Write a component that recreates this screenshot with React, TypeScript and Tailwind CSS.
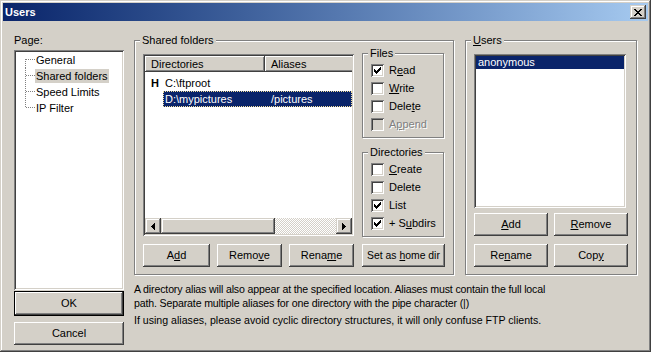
import type { ReactNode } from "react";

// classic 3d borders
const raised =
  "shadow-[inset_-1px_-1px_#404040,inset_1px_1px_#ffffff,inset_-2px_-2px_#808080,inset_2px_2px_#d4d0c8]";
const raisedSoft =
  "shadow-[inset_-1px_-1px_#404040,inset_1px_1px_#d4d0c8,inset_-2px_-2px_#808080,inset_2px_2px_#ffffff]";
const sunken =
  "shadow-[inset_1px_1px_#808080,inset_-1px_-1px_#ffffff,inset_2px_2px_#404040,inset_-2px_-2px_#d4d0c8]";

function Button({ children, className = "" }: { children: ReactNode; className?: string }) {
  return (
    <button
      type="button"
      className={`flex h-[23px] shrink-0 items-center justify-center bg-[#d4d0c8] leading-[13px] ${raised} ${className}`}
    >
      <span>{children}</span>
    </button>
  );
}

function GroupBox({
  label,
  className = "",
  children,
}: {
  label: ReactNode;
  className?: string;
  children?: ReactNode;
}) {
  return (
    <div
      className={`relative shrink-0 border border-[#808080] shadow-[1px_1px_0_#ffffff,inset_1px_1px_0_#ffffff] ${className}`}
    >
      <span className="absolute -top-[8px] left-[5px] bg-[#d4d0c8] px-[2px] leading-[14px]">{label}</span>
      {children}
    </div>
  );
}

function CheckMark() {
  return (
    <svg width="7" height="7" viewBox="0 0 7 7" shapeRendering="crispEdges">
      <path
        fill="#000"
        d="M6 0h1v1H6z M5 1h2v1H5z M0 2h1v1H0z M4 2h3v1H4z M0 3h2v1H0z M3 3h3v1H3z M0 4h5v1H0z M1 5h3v1H1z M2 6h1v1H2z"
      />
    </svg>
  );
}

function Check({
  checked = false,
  disabled = false,
  children,
}: {
  checked?: boolean;
  disabled?: boolean;
  children: ReactNode;
}) {
  return (
    <div className="flex h-[18px] items-center">
      <span
        className={`flex h-[13px] w-[13px] shrink-0 items-center justify-center ${sunken} ${
          disabled ? "bg-[#d4d0c8]" : "bg-white"
        }`}
      >
        {checked && <CheckMark />}
      </span>
      <span className={`ml-[5px] ${disabled ? "text-[#808080] [text-shadow:1px_1px_0_#ffffff]" : ""}`}>
        {children}
      </span>
    </div>
  );
}

function Arrow({ dir }: { dir: "left" | "right" }) {
  return (
    <svg width="4" height="7" viewBox="0 0 4 7" shapeRendering="crispEdges">
      <path
        fill="#000"
        d={
          dir === "left"
            ? "M3 0h1v7H3z M2 1h1v5H2z M1 2h1v3H1z M0 3h1v1H0z"
            : "M0 0h1v7H0z M1 1h1v5H1z M2 2h1v3H2z M3 3h1v1H3z"
        }
      />
    </svg>
  );
}

const pages = ["General", "Shared folders", "Speed Limits", "IP Filter"];

function PageTree() {
  return (
    <div className={`mt-[3px] h-[240px] bg-white pl-[11px] pt-[2px] ${sunken}`}>
      {pages.map((p, i) => (
        <div key={p} className="flex h-[16px] items-center">
          <svg width="10" height="16" className="shrink-0" shapeRendering="crispEdges">
            <line
              x1="0.5"
              x2="0.5"
              y1={i === 0 ? 7 : 0}
              y2={i === pages.length - 1 ? 8 : 16}
              stroke="#808080"
              strokeDasharray="1 1"
            />
            <line x1="1" x2="10" y1="7.5" y2="7.5" stroke="#808080" strokeDasharray="1 1" />
          </svg>
          <span className={`h-[14px] px-[1px] leading-[14px] ${p === "Shared folders" ? "bg-[#d4d0c8]" : ""}`}>
            {p}
          </span>
        </div>
      ))}
    </div>
  );
}

function FolderList() {
  return (
    <div className={`mt-[1px] flex h-[182px] w-[211px] shrink-0 bg-white p-[2px] ${sunken}`}>
      <div className="flex flex-1 flex-col overflow-hidden">
        <div className="flex h-[16px] shrink-0">
          <div className={`flex w-[120px] shrink-0 items-center bg-[#d4d0c8] pl-[6px] ${raised}`}>Directories</div>
          <div className={`flex w-[100px] shrink-0 items-center bg-[#d4d0c8] pl-[6px] ${raised}`}>Aliases</div>
        </div>

        <div className="flex-1 pt-[3px]">
          <div className="flex h-[16px] items-center">
            <span className="w-[18px] shrink-0 pl-[6px] font-bold">H</span>
            <span className="pl-[2px]">{"C:\\ftproot"}</span>
          </div>
          <div className="flex h-[16px] items-center">
            <span className="w-[18px] shrink-0" />
            <div className="flex h-full flex-1 items-center bg-[#0a246a] text-white outline-1 -outline-offset-1 outline-dotted outline-[#f3df9a]">
              <span className="w-[102px] shrink-0 pl-[2px]">{"D:\\mypictures"}</span>
              <span className="pl-[6px]">/pictures</span>
            </div>
          </div>
        </div>

        {/* horizontal scrollbar */}
        <div className="flex h-[16px] shrink-0">
          <div className={`flex w-[16px] shrink-0 items-center justify-center bg-[#d4d0c8] ${raisedSoft}`}>
            <Arrow dir="left" />
          </div>
          <div className={`w-[114px] shrink-0 bg-[#d4d0c8] ${raisedSoft}`} />
          <div className="flex-1 bg-[repeating-conic-gradient(#ffffff_0%_25%,#d4d0c8_0%_50%)] bg-[length:2px_2px]" />
          <div className={`flex w-[16px] shrink-0 items-center justify-center bg-[#d4d0c8] ${raisedSoft}`}>
            <Arrow dir="right" />
          </div>
        </div>
      </div>
    </div>
  );
}

export default function App() {
  return (
    <div
      className={`h-[352px] w-[651px] overflow-hidden bg-[#d4d0c8] p-[3px] font-['Liberation_Sans',Arial,sans-serif] text-[11px] leading-[13px] text-black ${raisedSoft}`}
    >
      {/* title bar */}
      <div className="flex h-[18px] items-center justify-between bg-linear-to-r from-[#0a246a] to-[#a6caf0] px-[2px]">
        <span className="font-bold leading-[18px] text-white">Users</span>
        <button type="button" className={`flex h-[14px] w-[16px] items-center justify-center bg-[#d4d0c8] ${raisedSoft}`}>
          <svg width="8" height="7" viewBox="0 0 8 7" shapeRendering="crispEdges">
            <path
              fill="#000"
              d="M0 0h2v1H0z M6 0h2v1H6z M1 1h2v1H1z M5 1h2v1H5z M2 2h4v1H2z M3 3h2v1H3z M2 4h4v1H2z M1 5h2v1H1z M5 5h2v1H5z M0 6h2v1H0z M6 6h2v1H6z"
            />
          </svg>
        </button>
      </div>

      <div className="flex pl-[11px] pt-[13px]">
        {/* ===== left: pages ===== */}
        <div className="flex w-[110px] shrink-0 flex-col">
          <div className="h-[13px] leading-[13px]">Page:</div>
          <PageTree />
          <div className="mt-[1px] border border-black">
            <Button className="w-full">OK</Button>
          </div>
          <Button className="mt-[6px] w-full">Cancel</Button>
        </div>

        {/* ===== right ===== */}
        <div className="ml-[10px] mt-[6px] flex flex-col">
          <div className="flex">
            <GroupBox label="Shared folders" className="h-[235px] w-[320px]">
              <div className="flex flex-col pl-[8px] pt-[12px]">
                <div className="flex">
                  <FolderList />
                  <div className="ml-[8px] flex w-[82px] flex-col">
                    <GroupBox label="Files" className="h-[85px]">
                      <div className="flex flex-col pl-[8px] pt-[7px]">
                        <Check checked>
                          R<u>e</u>ad
                        </Check>
                        <Check>
                          <u>W</u>rite
                        </Check>
                        <Check>
                          Dele<u>t</u>e
                        </Check>
                        <Check disabled>
                          A<u>p</u>pend
                        </Check>
                      </div>
                    </GroupBox>
                    <GroupBox label="Directories" className="mt-[14px] h-[85px]">
                      <div className="flex flex-col pl-[8px] pt-[7px]">
                        <Check>
                          <u>C</u>reate
                        </Check>
                        <Check>Delete</Check>
                        <Check checked>List</Check>
                        <Check checked>
                          + S<u>u</u>bdirs
                        </Check>
                      </div>
                    </GroupBox>
                  </div>
                </div>
                <div className="mt-[7px] flex">
                  <Button className="w-[67px]">
                    A<u>d</u>d
                  </Button>
                  <Button className="ml-[7px] w-[65px]">
                    Remo<u>v</u>e
                  </Button>
                  <Button className="ml-[7px] w-[65px]">
                    Rena<u>m</u>e
                  </Button>
                  <Button className="ml-[8px] w-[83px] text-[10.4px]">
                    Set as <u>h</u>ome dir
                  </Button>
                </div>
              </div>
            </GroupBox>

            <GroupBox
              label={
                <>
                  <u>U</u>sers
                </>
              }
              className="ml-[11px] h-[235px] w-[172px]"
            >
              <div className="flex flex-col pl-[8px] pt-[13px]">
                <div className={`h-[154px] w-[152px] bg-white p-[2px] ${sunken}`}>
                  <div className="h-[13px] bg-[#0a246a] pl-[2px] leading-[13px] text-white">anonymous</div>
                </div>
                <div className="mt-[5px] flex">
                  <Button className="w-[74px]">
                    <u>A</u>dd
                  </Button>
                  <Button className="ml-[6px] w-[74px]">
                    <u>R</u>emove
                  </Button>
                </div>
                <div className="mt-[8px] flex">
                  <Button className="w-[74px]">
                    Re<u>n</u>ame
                  </Button>
                  <Button className="ml-[6px] w-[74px]">
                    Cop<u>y</u>
                  </Button>
                </div>
              </div>
            </GroupBox>
          </div>

          <div className="mt-[7px] text-[10.6px] leading-[14px]">
            <p className="tracking-[-0.15px]">
              A directory alias will also appear at the specified location. Aliases must contain the full local
              <br />
              path. Separate multiple aliases for one directory with the pipe character (|)
            </p>
            <p className="mt-[3px]">
              If using aliases, please avoid cyclic directory structures, it will only confuse FTP clients.
            </p>
          </div>
        </div>
      </div>
    </div>
  );
}
